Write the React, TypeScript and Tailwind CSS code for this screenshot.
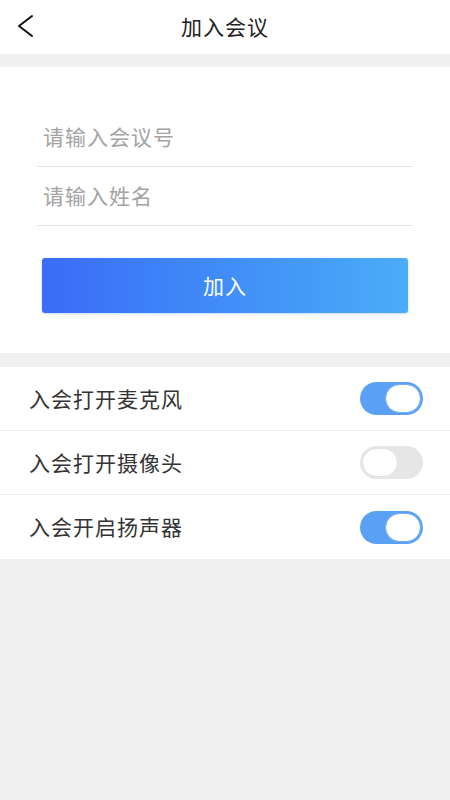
import React from 'react';

const font = { fontFamily: '"Noto Sans CJK SC", "Noto Sans", sans-serif' };

function Toggle({ on }: { on: boolean }) {
  return (
    <div
      className={`flex h-[33px] w-[63px] items-center rounded-full px-[2px] ${
        on ? 'justify-end bg-[#5aa1f6]' : 'justify-start bg-[#e6e6e6]'
      }`}
    >
      <div
        className={`h-[29px] w-[36px] rounded-full bg-white border ${
          on ? 'border-[#6aaaf6]' : 'border-[#e0e0e0]'
        }`}
      />
    </div>
  );
}

export default function App() {
  const rows = [
    { label: '入会打开麦克风', on: true },
    { label: '入会打开摄像头', on: false },
    { label: '入会开启扬声器', on: true },
  ];

  return (
    <div className="min-h-[800px] w-[450px] bg-[#f0f0f0]" style={font}>
      {/* 顶部导航 */}
      <div className="relative flex h-[54px] items-center justify-center bg-white">
        <svg
          className="absolute left-[16px] top-[14px]"
          width="20"
          height="24"
          viewBox="0 0 20 24"
          fill="none"
        >
          <path d="M16 2 L3 12 L16 22" stroke="#111" strokeWidth="2" strokeLinecap="round" strokeLinejoin="round" />
        </svg>
        <span className="text-[21px] tracking-[1px] text-[#222]">加入会议</span>
      </div>

      {/* 表单 */}
      <div className="mt-[13px] bg-white px-[37px] pt-[46px] pb-[40px]">
        <div className="flex h-[54px] items-center border-b border-[#e3e3e3] pb-[6px] pl-[6px] text-[21px] tracking-[1px] text-[#a3a3a3]">
          请输入会议号
        </div>
        <div className="flex h-[59px] items-center border-b border-[#e3e3e3] pl-[6px] text-[21px] tracking-[1px] text-[#a3a3a3]">
          请输入姓名
        </div>
        <button className="mx-[5px] mt-[32px] flex h-[55px] w-[366px] items-center justify-center rounded-[3px] bg-gradient-to-r from-[#3b6bf7] to-[#4bacf7] text-[21px] tracking-[1px] text-white shadow-[0_1px_3px_rgba(60,120,240,0.3)]">
          加入
        </button>
      </div>

      {/* 设置 */}
      <div className="mt-[14px] bg-white">
        {rows.map((r, i) => (
          <div
            key={r.label}
            className={`flex h-[64px] items-center justify-between pl-[29px] pr-[27px] ${
              i < rows.length - 1 ? 'border-b border-[#ebebeb]' : ''
            }`}
          >
            <span className="text-[21px] tracking-[1px] text-[#333]">{r.label}</span>
            <Toggle on={r.on} />
          </div>
        ))}
      </div>
    </div>
  );
}
